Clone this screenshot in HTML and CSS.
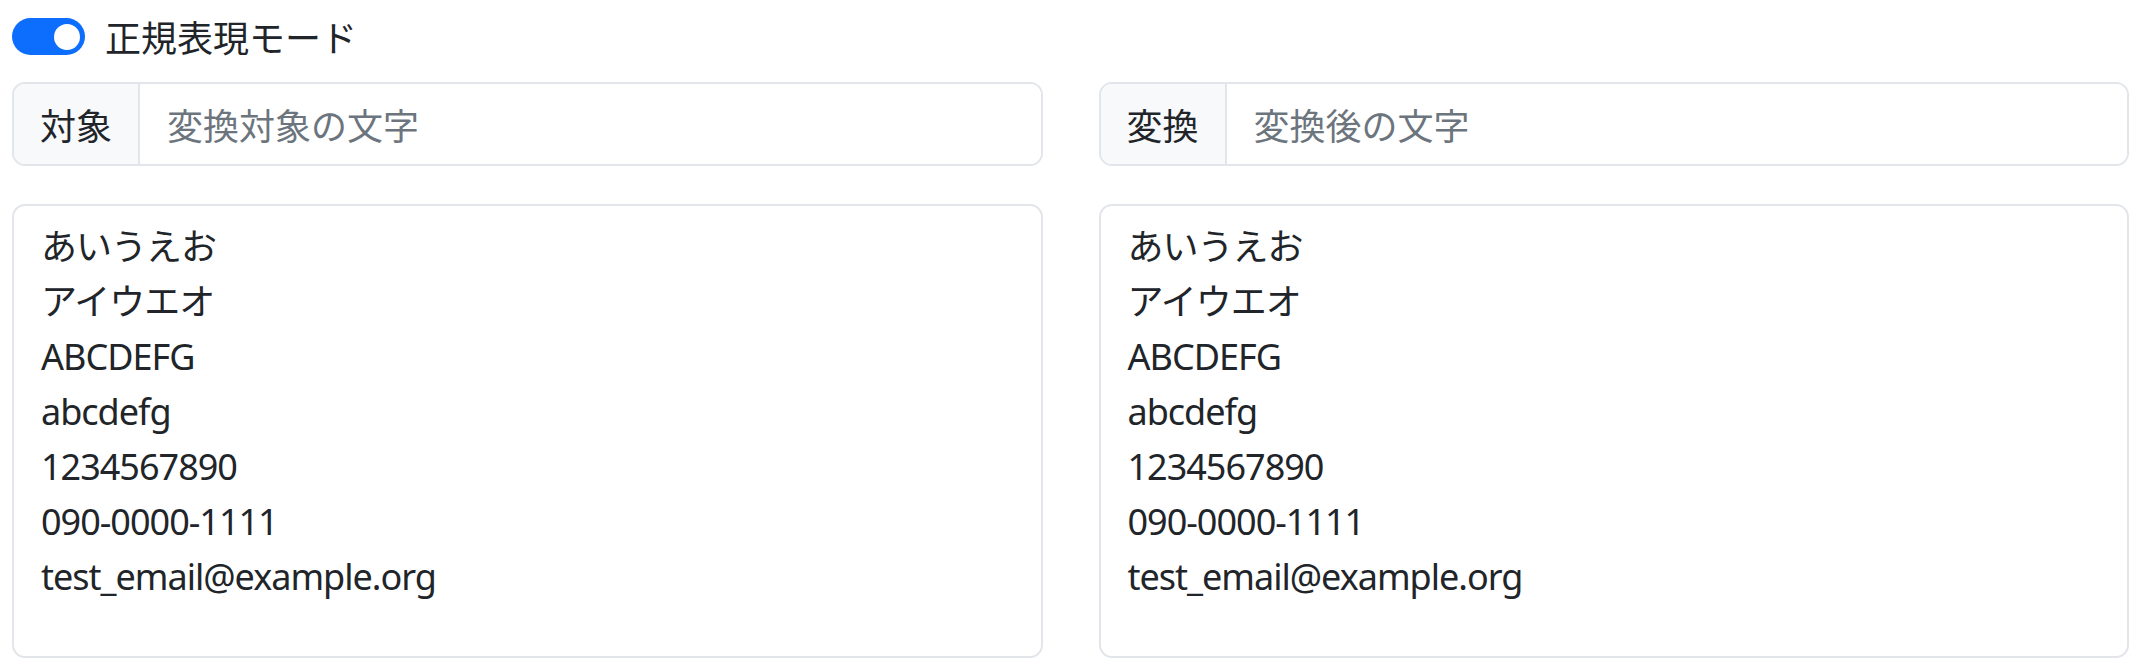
FILE: index.html
```html
<!DOCTYPE html>
<html lang="ja">
<head>
    <meta charset="UTF-8">
    <meta name="viewport" content="width=device-width, initial-scale=1.0">
    <title>正規表現置換</title>
    <link rel="stylesheet" href="styles.css">
</head>
<body>
    <div class="container">
        <!-- Mode Switch -->
        <label class="mode-switch">
            <input type="checkbox" class="switch-input" checked>
            <span class="switch-label">正規表現モード</span>
        </label>

        <!-- Search / Replace Inputs -->
        <div class="row">
            <div class="input-group">
                <span class="input-group-text">対象</span>
                <input type="text" class="form-control" placeholder="変換対象の文字">
            </div>
            <div class="input-group">
                <span class="input-group-text">変換</span>
                <input type="text" class="form-control" placeholder="変換後の文字">
            </div>
        </div>

        <!-- Source / Result -->
        <div class="row">
            <textarea class="text-box">あいうえお
アイウエオ
ABCDEFG
abcdefg
1234567890
090-0000-1111
test_email@example.org</textarea>
            <textarea class="text-box" readonly>あいうえお
アイウエオ
ABCDEFG
abcdefg
1234567890
090-0000-1111
test_email@example.org</textarea>
        </div>
    </div>
</body>
</html>
```

FILE: styles.css
```css
body {
    margin: 0;
    font-family: "Noto Sans", "Noto Sans CJK JP", sans-serif;
    font-size: 36px;
    line-height: 55px;
    color: #212529;
    background-color: #fff;
}
.container {
    padding: 9px 10px 0 12px;
}
.mode-switch {
    display: flex;
    align-items: center;
    gap: 20px;
    height: 55px;
}
.switch-input {
    appearance: none;
    margin: 0;
    width: 73px;
    height: 37px;
    border-radius: 19px;
    background-color: #0d6efd;
    position: relative;
    cursor: pointer;
}
.switch-input::after {
    content: "";
    position: absolute;
    top: 5.5px;
    right: 5px;
    width: 26px;
    height: 26px;
    border-radius: 50%;
    background-color: #fff;
}
.switch-label {
    font-family: "Noto Sans CJK JP", sans-serif;
}
.row {
    display: grid;
    grid-template-columns: 1fr 1fr;
    column-gap: 56px;
}
.row + .row {
    margin-top: 38px;
}
.mode-switch + .row {
    margin-top: 18px;
}
.input-group {
    display: flex;
    border: 2px solid #e2e5e9;
    border-radius: 13px;
    overflow: hidden;
    height: 84px;
    box-sizing: border-box;
}
.input-group-text {
    display: flex;
    align-items: center;
    padding: 0 26px;
    background-color: #f8f9fa;
    border-right: 2px solid #e2e5e9;
    font-family: "Noto Sans CJK JP", sans-serif;
}
.form-control {
    flex: 1;
    min-width: 0;
    border: none;
    outline: none;
    padding: 0 27px;
    font: inherit;
    font-family: "Noto Sans CJK JP", sans-serif;
    color: #212529;
}
.form-control::placeholder {
    color: #6c757d;
}
.text-box {
    height: 454px;
    box-sizing: border-box;
    border: 2px solid #e2e5e9;
    border-radius: 13px;
    padding: 13px 27px;
    font: inherit;
    letter-spacing: -1px;
    color: #212529;
    resize: none;
    outline: none;
    overflow: hidden;
}
```
